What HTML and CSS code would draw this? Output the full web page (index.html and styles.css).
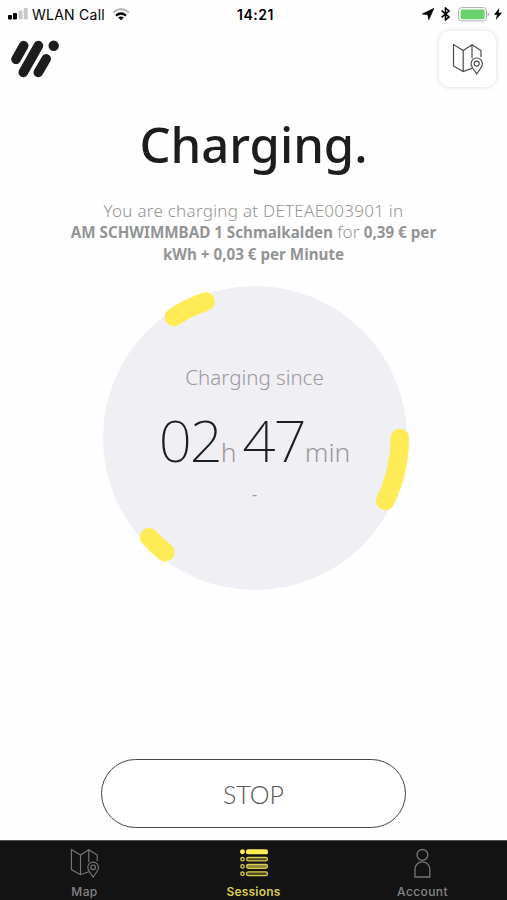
FILE: index.html
```html
<!DOCTYPE html>
<html lang="en">
<head>
    <meta charset="utf-8">
    <title>Charging</title>
    <link rel="stylesheet" href="styles.css">
</head>
<body>

<div class="status-bar">
    <div class="status-left">
        <svg width="20" height="12" viewBox="0 0 20 12">
            <rect x="0" y="7" width="4" height="4.5" rx="1"/>
            <rect x="5" y="5" width="4" height="6.5" rx="1"/>
            <rect x="10.5" y="2.5" width="4" height="9" rx="1" fill="#c8c8c8"/>
            <rect x="15.7" y="0" width="4" height="11.5" rx="1" fill="#c8c8c8"/>
        </svg>
        <span class="carrier">WLAN Call</span>
        <svg class="wifi" width="18" height="13" viewBox="0 0 18 13" fill="none" stroke-width="2.2">
            <path d="M1 4.5Q9-2.2 17 4.5" stroke="#b9b9b9"/>
            <path d="M4 7.6Q9 3.4 14 7.6" stroke="#000"/>
            <path d="M6.2 9.4Q9 7.4 11.8 9.4L9 12.3z" fill="#000"/>
        </svg>
    </div>
    <div class="clock">14:21</div>
    <div class="status-right">
        <svg width="12" height="12" viewBox="0 0 12 12"><path d="M12 .3L6.8 11.8 5.7 6.7.2 6z" stroke="#000" stroke-width=".6"/></svg>
        <svg class="bluetooth" width="9" height="14" viewBox="0 0 9 14" fill="none" stroke="#000" stroke-width="1.6"><path d="M.6 3.7L8 10 4.5 12.8V1.2L8 4 .6 10.3"/></svg>
        <svg class="battery" width="32" height="15" viewBox="0 0 32 15">
            <rect x=".6" y=".6" width="27.8" height="13.3" rx="3" fill="#fff" stroke="#aaa"/>
            <rect x="2.6" y="2.5" width="24" height="9.7" rx="1.4" fill="#68d16b"/>
            <path d="M29.7 5.2q2.4 2 0 4.3z" fill="#999"/>
        </svg>
        <svg width="8" height="12" viewBox="0 0 8 12"><path d="M5.3 0L0 6.7h3L1.8 12 8 4.8H4.7z"/></svg>
    </div>
</div>

<div class="header">
    <svg class="logo" width="49" height="39" viewBox="0 0 49 39" fill="none" stroke="#1d1d1b" stroke-width="9.6" stroke-linecap="round">
        <path d="M5 19.3L12.7 5.6M12.3 32.4L27.4 5.6M27.3 32.4L35.2 18.8"/>
        <circle cx="42.7" cy="5.7" r="5.2" fill="#1d1d1b" stroke="none"/>
    </svg>
    <button class="map-button">
        <svg width="32" height="32" viewBox="0 0 32 32" fill="none" stroke="#4b4b4b" stroke-width="1.2">
            <path d="M20 25.4L11.2 28.5 1.5 23V1.5l9.7 6L20 1.8l9 5.7v6.7M11.2 7.5v21M20 1.8v13.4"/>
            <path d="M24.7 31C21.8 26.8 19 23.6 19 20.7a5.7 5.7 0 0 1 11.4 0C30.4 23.6 27.5 26.8 24.7 31z"/>
            <circle cx="24.7" cy="20.6" r="2.5"/>
        </svg>
    </button>
</div>

<div class="content">
    <h1>Charging.</h1>
    <div class="description">
        <p class="line-1">You are charging at DETEAE003901 in</p>
        <p><b>AM SCHWIMMBAD 1 Schmalkalden</b> for <b>0,39 € per</b></p>
        <p><b>kWh + 0,03 € per Minute</b></p>
    </div>

    <div class="dial">
        <svg class="ring" width="308" height="308" viewBox="0 0 308 308">
            <circle cx="154" cy="154" r="152" fill="#f0eff4"/>
            <g fill="none" stroke="#fdec55" stroke-width="18.6" stroke-linecap="round">
                <path d="M73 33A145 145 0 0 1 104.7 17.5"/>
                <path d="M298.9 154A145 145 0 0 1 284.3 217"/>
                <path d="M48 253.3A145 145 0 0 0 64.2 268.3"/>
            </g>
        </svg>
        <div class="since">Charging since</div>
        <div class="time">
            <span class="num">02</span><span class="unit hours">h</span><span class="num">47</span><span class="unit minutes">min</span>
        </div>
        <div class="energy">-</div>
    </div>
</div>

<button class="stop">STOP</button>

<div class="tabs">
    <div class="tab">
        <svg width="30" height="30" viewBox="0 0 32 32" fill="none" stroke="#777" stroke-width="1.2">
            <path d="M20 25.4L11.2 28.5 1.5 23V1.5l9.7 6L20 1.8l9 5.7v6.7M11.2 7.5v21M20 1.8v13.4"/>
            <path d="M24.7 31C21.8 26.8 19 23.6 19 20.7a5.7 5.7 0 0 1 11.4 0C30.4 23.6 27.5 26.8 24.7 31z"/>
            <circle cx="24.7" cy="20.6" r="2.5"/>
        </svg>
        <span>Map</span>
    </div>
    <div class="tab active">
        <svg width="30" height="30" viewBox="0 0 30 30" fill="none" stroke="#d8cb4b" stroke-width="1.3">
            <g fill="#fdec55" stroke="#fdec55"><circle cx="3.5" cy="3.8" r="1.8"/><rect x="7.6" y="2" width="20.8" height="3.7" rx="1.5"/></g>
            <circle cx="3.5" cy="11.2" r="1.7"/><rect x="7.6" y="9.5" width="20.8" height="3.4" rx="1.7" fill="#514b20"/>
            <circle cx="3.5" cy="18.4" r="1.7"/><rect x="7.6" y="16.5" width="20.8" height="3.8" rx="1.7" fill="#8a8038"/>
            <circle cx="3.5" cy="25.7" r="1.7"/><rect x="7.6" y="23.8" width="20.8" height="3.8" rx="1.7" fill="#514b20"/>
        </svg>
        <span>Sessions</span>
    </div>
    <div class="tab">
        <svg width="30" height="30" viewBox="0 0 30 30" fill="none" stroke="#777" stroke-width="1.3">
            <circle cx="14.4" cy="6.9" r="5.4"/>
            <path d="M7 29V21.2a7.4 7.4 0 0 1 14.8 0V29z"/>
        </svg>
        <span>Account</span>
    </div>
</div>

</body>
</html>
```
FILE: styles.css
```css
body {
    margin: 0;
    width: 507px;
    height: 900px;
    display: flex;
    flex-direction: column;
    overflow: hidden;
    background: #fefefe;
    font-family: "Noto Sans", sans-serif;
}
h1, p {
    margin: 0;
}
svg {
    display: block;
}
.status-bar {
    display: grid;
    grid-template-columns: 1fr auto 1fr;
    align-items: center;
    height: 28px;
    padding: 0 5px 0 8px;
    font-family: Inter, sans-serif;
    font-size: 14px;
}
.status-left,
.status-right {
    display: flex;
    align-items: center;
}
.status-right {
    justify-content: flex-end;
}
.carrier {
    margin-left: 4px;
    letter-spacing: 0.25px;
}
.wifi {
    margin-left: 7px;
}
.clock {
    font-weight: 600;
    letter-spacing: 0.5px;
    padding-left: 1px;
}
.bluetooth {
    margin: 0 8px 0 7px;
}
.battery {
    margin-right: 4px;
}
.header {
    display: flex;
    justify-content: space-between;
    height: 62px;
    padding: 3px 11px 0 11px;
}
.logo {
    margin-top: 9px;
}
.map-button {
    width: 57px;
    height: 56px;
    padding: 0;
    display: flex;
    align-items: center;
    justify-content: center;
    background: #fff;
    border: none;
    border-radius: 10px;
    box-shadow: 0 0 5px rgba(0, 0, 0, 0.14);
}
.content {
    flex: 1;
    display: flex;
    flex-direction: column;
    align-items: center;
}
h1 {
    margin-top: 18px;
    font-size: 49px;
    font-weight: 500;
    line-height: 66px;
    color: #1d1d1b;
}
.description {
    margin-top: 23px;
    font-size: 17px;
    font-weight: 300;
    line-height: 21px;
    text-align: center;
    white-space: nowrap;
    color: #929494;
}
.line-1 {
    letter-spacing: 0.27px;
}
.description b {
    font-size: 15.2px;
    font-weight: 700;
}
.dial {
    position: relative;
    width: 308px;
    height: 308px;
    margin: 19px 0 0 2px;
    text-align: center;
    color: #999a9e;
}
.ring {
    position: absolute;
    top: 0;
    left: 0;
}
.since,
.time,
.energy {
    position: relative;
}
.since {
    padding-top: 78px;
    font-size: 20.5px;
    font-weight: 300;
    line-height: 30px;
}
.time {
    display: flex;
    justify-content: center;
    align-items: baseline;
    margin-top: 14px;
    line-height: 68px;
}
.num {
    font-size: 58px;
    font-weight: 200;
    letter-spacing: -2px;
    color: #1d1d1f;
}
.unit {
    font-size: 26.5px;
    font-weight: 300;
}
.hours {
    margin-right: 6px;
}
.energy {
    margin-top: -7px;
    font-size: 16px;
    line-height: 30px;
}
.stop {
    width: 305px;
    height: 69px;
    margin: 0 0 12px 101px;
    background: #fff;
    border: 1.5px solid #444;
    border-radius: 35px;
    font-family: Lato, sans-serif;
    font-size: 25px;
    font-weight: 300;
    color: #555;
}
.tabs {
    display: grid;
    grid-template-columns: repeat(3, 1fr);
    height: 60px;
    box-sizing: border-box;
    border-top: 1px solid #555;
    background: #131313;
}
.tab {
    display: flex;
    flex-direction: column;
    align-items: center;
    padding-top: 7px;
    font-family: Inter, sans-serif;
    font-size: 12px;
    font-weight: 500;
    line-height: 16px;
    letter-spacing: 0.4px;
    color: #858585;
}
.tab span {
    margin-top: 6px;
}
.active {
    color: #d8cb4b;
    font-weight: 600;
    letter-spacing: 0.2px;
}
```
